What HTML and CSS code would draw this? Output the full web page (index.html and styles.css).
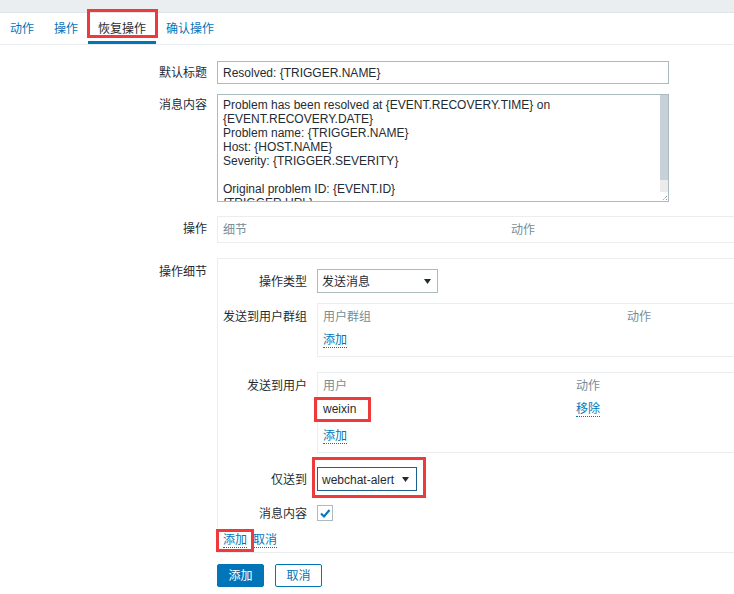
FILE: index.html
```html
<!DOCTYPE html>
<html lang="zh-CN">
<head>
<meta charset="utf-8">
<title>恢复操作</title>
<link rel="stylesheet" href="styles.css">
</head>
<body>
<div class="page">
  <div class="topbar"></div>
  <nav class="tabs">
    <a class="tab">动作</a>
    <a class="tab">操作</a>
    <a class="tab active">恢复操作</a>
    <a class="tab">确认操作</a>
  </nav>

  <form class="form">
    <div class="row">
      <label class="label">默认标题</label>
      <div class="control"><input class="input" type="text" value="Resolved: {TRIGGER.NAME}"></div>
    </div>

    <div class="row row-msg">
      <label class="label label-msg">消息内容</label>
      <div class="control">
        <div class="textarea-wrap">
          <textarea class="textarea">Problem has been resolved at {EVENT.RECOVERY.TIME} on {EVENT.RECOVERY.DATE}
Problem name: {TRIGGER.NAME}
Host: {HOST.NAME}
Severity: {TRIGGER.SEVERITY}

Original problem ID: {EVENT.ID}
{TRIGGER.URL}</textarea>
          <div class="scrollbar">
            <div class="thumb"></div>
            <div class="track"></div>
            <div class="grip"><svg width="8" height="9" viewBox="0 0 8 9"><path d="M7 4L3 8M7 7L6 8" stroke="#6b6b6b" stroke-width="1" stroke-dasharray="1 1" fill="none"/></svg></div>
          </div>
        </div>
      </div>
    </div>

    <div class="row row-ops">
      <label class="label label-ops">操作</label>
      <div class="control">
        <div class="box ops-box">
          <div class="trow ops-cols"><span class="th">细节</span><span class="th">动作</span></div>
        </div>
      </div>
    </div>

    <div class="row row-detail">
      <label class="label label-detail">操作细节</label>
      <div class="control">
        <div class="box detail-box">
          <div class="subrow">
            <span class="sublabel">操作类型</span>
            <div class="select select-type"><span>发送消息</span><svg class="arrow" width="7" height="5" viewBox="0 0 7 5"><polygon points="0,0 7,0 3.5,5" fill="#1f2c33"/></svg></div>
          </div>

          <div class="subrow subrow-box subrow-groups">
            <span class="sublabel">发送到用户群组</span>
            <div class="subtable">
              <div class="trow thead groups-cols"><span class="th">用户群组</span><span class="th">动作</span></div>
              <div class="trow tr"><span class="td"><a class="link">添加</a></span></div>
            </div>
          </div>

          <div class="subrow subrow-box subrow-users">
            <span class="sublabel">发送到用户</span>
            <div class="subtable">
              <div class="trow thead users-cols"><span class="th">用户</span><span class="th">动作</span></div>
              <div class="trow tr users-cols"><span class="td">weixin</span><span class="td"><a class="link">移除</a></span></div>
              <div class="trow tr"><span class="td"><a class="link">添加</a></span></div>
            </div>
          </div>

          <div class="subrow subrow-only">
            <span class="sublabel">仅送到</span>
            <div class="select select-media focused"><span>webchat-alert</span><svg class="arrow" width="7" height="5" viewBox="0 0 7 5"><polygon points="0,0 7,0 3.5,5" fill="#1f2c33"/></svg></div>
          </div>

          <div class="subrow subrow-check">
            <span class="sublabel">消息内容</span>
            <span class="checkbox"><svg width="14" height="14" viewBox="0 0 14 14"><polyline points="3,7.5 6,10.5 11.5,4" fill="none" stroke="#0275b8" stroke-width="2"/></svg></span>
          </div>

          <div class="detail-links">
            <a class="link">添加</a>
            <a class="link">取消</a>
          </div>
        </div>
      </div>
    </div>

    <div class="row row-buttons">
      <span class="label"></span>
      <div class="control buttons">
        <button type="button" class="btn btn-primary">添加</button>
        <button type="button" class="btn btn-alt">取消</button>
      </div>
    </div>
  </form>

  <div class="mark mark-tab"></div>
  <div class="mark mark-user"></div>
  <div class="mark mark-media"></div>
  <div class="mark mark-add"></div>
</div>
</body>
</html>
```

FILE: styles.css
```css
* { box-sizing: border-box; }

html, body {
  margin: 0;
  padding: 0;
  background: #ffffff;
}

body {
  font-family: "Liberation Sans", Arial, "Noto Sans CJK SC", sans-serif;
  font-size: 12px;
  line-height: 14px;
  color: #1f2c33;
}

.page {
  position: relative;
  width: 734px;
  height: 594px;
  overflow: hidden;
}

/* top strip */
.topbar {
  height: 13px;
  background: #ebeef0;
  border-bottom: 1px solid #dfe4e7;
}

/* tabs */
.tabs {
  display: flex;
  border-bottom: 1px solid #ebeef0;
}

.tab {
  padding: 9px 10px 5px;
  line-height: 14px;
  color: #0275b8;
  text-decoration: none;
  border-bottom: 3px solid transparent;
}

.tab.active {
  color: #1f2c33;
  border-bottom-color: #0275b8;
}

/* form */
.form {
  padding-top: 16px;
}

.row {
  display: grid;
  grid-template-columns: 217px 1fr;
  align-items: start;
}

.row-msg { margin-top: 10px; }
.row-ops { margin-top: 14px; }
.row-detail { margin-top: 15px; }
.row-buttons { margin-top: 11px; }

.label {
  text-align: right;
  padding: 5px 10px 0 0;
  line-height: 14px;
}

.label-msg { padding-top: 4px; }
.label-ops { padding-top: 6px; }
.label-detail { padding-top: 7px; }

.input {
  display: block;
  width: 452px;
  height: 23px;
  margin: 0;
  padding: 1px 5px 0;
  border: 1px solid #acbbc2;
  font: inherit;
  color: #1f2c33;
  background: #fff;
  outline: none;
}

/* textarea with its scrollbar drawn beside it */
.textarea-wrap {
  display: flex;
  width: 452px;
  height: 108px;
  border: 1px solid #acbbc2;
  background: #fff;
}

.textarea {
  flex: 1;
  display: block;
  margin: 0;
  padding: 3px 5px 0;
  border: 0;
  font: inherit;
  line-height: 14px;
  color: #1f2c33;
  background: #fff;
  resize: none;
  overflow: hidden;
  outline: none;
}

.scrollbar {
  width: 8px;
  display: flex;
  flex-direction: column;
}

.thumb {
  height: 85px;
  background: #c7d1d7;
}

.track {
  flex: 1;
  background: #ebebeb;
}

.grip {
  height: 9px;
  background: #ffffff;
}

.grip svg { display: block; }

/* boxes / tables */
.box {
  border: 1px solid #ebeef0;
  background: #fff;
}

.ops-box {
  width: 560px;
  height: 27px;
  padding: 6px 0 5px;
}

.trow {
  display: grid;
  grid-template-columns: 1fr;
}

.th, .td {
  padding: 0 5px;
  white-space: nowrap;
}

.th { color: #768d99; }

.ops-cols { grid-template-columns: 288px 1fr; }
.groups-cols { grid-template-columns: 304px 1fr; }
.users-cols { grid-template-columns: 253px 1fr; }

.detail-box {
  width: 560px;
  padding: 10px 0 4px;
}

.subrow {
  display: grid;
  grid-template-columns: 99px 1fr;
  align-items: center;
}

.subrow-box { align-items: start; }
.subrow-box .sublabel { padding-top: 7px; }

.subrow-groups { margin-top: 10px; }
.subrow-users { margin-top: 15px; }
.subrow-only { margin-top: 14px; }
.subrow-check { margin-top: 14px; }

.sublabel {
  text-align: right;
  padding: 1px 10px 0 0;
  white-space: nowrap;
}

.subtable {
  border: 1px solid #ebeef0;
  padding: 3px 0;
}

.thead { padding: 3px 0 2px; }
.tr { padding: 7px 0 6px; }

.link {
  display: inline-block;
  vertical-align: top;
  color: #0275b8;
  text-decoration: none;
  border-bottom: 1px dotted #0275b8;
  margin-bottom: -1px;
  cursor: pointer;
}

.select {
  display: flex;
  align-items: center;
  justify-content: space-between;
  height: 24px;
  border: 1px solid #acbbc2;
  background: #fff;
  padding: 1px 6px 0 4px;
  white-space: nowrap;
}

.select .arrow { display: block; margin-top: -1px; }

.select-type { width: 121px; }
.select-media { width: 100px; padding-right: 7px; }
.select.focused { border-color: #1d5f8d; }

.checkbox {
  display: flex;
  align-items: center;
  justify-content: center;
  width: 16px;
  height: 16px;
  border: 1px solid #acbbc2;
  background: #fff;
}

.detail-links {
  display: flex;
  align-items: flex-start;
  gap: 6px;
  padding: 1px 0 0 5px;
  margin-top: 11px;
  height: 16px;
}

.detail-links .link { margin-bottom: 0; }

/* buttons */
.buttons {
  display: flex;
  gap: 11px;
}

.btn {
  width: 47px;
  height: 23px;
  padding: 1px 0 0;
  border: 1px solid #0275b8;
  border-radius: 2px;
  font: inherit;
  line-height: 14px;
  cursor: pointer;
}

.btn-primary {
  background: #0275b8;
  color: #ffffff;
}

.btn-alt {
  background: #ffffff;
  color: #0275b8;
}

/* red annotation frames drawn over the screenshot */
.mark {
  position: absolute;
  border: 3px solid #ee3a3a;
  pointer-events: none;
}

.mark-tab { left: 87px; top: 9px; width: 71px; height: 29px; }
.mark-user { left: 314px; top: 397px; width: 57px; height: 25px; }
.mark-media { left: 312px; top: 457px; width: 114px; height: 41px; }
.mark-add { left: 216px; top: 529px; width: 38px; height: 23px; }
```
